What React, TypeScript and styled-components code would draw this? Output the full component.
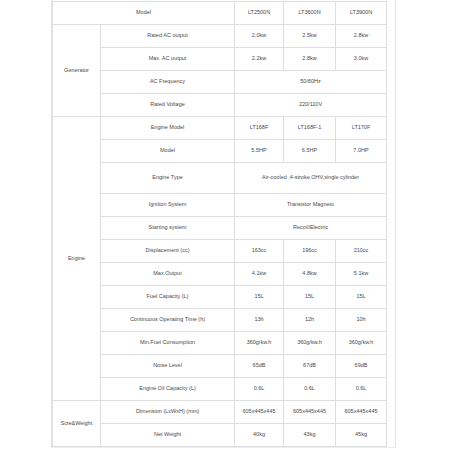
import styled, { createGlobalStyle } from "styled-components";

const GlobalStyle = createGlobalStyle`
  html, body {
    margin: 0;
    padding: 0;
    background: #ffffff;
  }
  body {
    font-family: "Liberation Sans", Arial, sans-serif;
  }
`;

const Frame = styled.div`
  margin-left: 51px;
  width: 345px;
  height: 448px;
  padding-top: 1px;
  border-left: 1px solid #e4e4e4;
  border-right: 1px solid #e4e4e4;
  border-bottom: 1px solid #ececec;
  box-sizing: border-box;
`;

const Table = styled.table`
  border-collapse: collapse;
  table-layout: fixed;
  width: 335px;
  color: #4a4a4a;
  font-size: 5.5px;
`;

const Cell = styled.td<{ $tall?: boolean }>`
  border: 1px solid #dedede;
  height: ${(p) => (p.$tall ? 30 : 22)}px;
  padding: 0;
  text-align: center;
  vertical-align: middle;
  white-space: nowrap;
  line-height: 1;
`;

type Row = {
  label: string;
  values: string[];
  tall?: boolean;
};

type Group = {
  name: string;
  rows: Row[];
};

const groups: Group[] = [
  {
    name: "Generator",
    rows: [
      { label: "Rated AC output", values: ["2.0kw", "2.5kw", "2.8kw"] },
      { label: "Max. AC output", values: ["2.2kw", "2.8kw", "3.0kw"] },
      { label: "AC Frequency", values: ["50/60Hz"] },
      { label: "Rated Voltage", values: ["220/110V"] },
    ],
  },
  {
    name: "Engine",
    rows: [
      { label: "Engine Model", values: ["LT168F", "LT168F-1", "LT170F"] },
      { label: "Model", values: ["5.5HP", "6.5HP", "7.0HP"] },
      {
        label: "Engine Type",
        values: ["Air-cooled ,4-stroke,OHV,single cylinder"],
        tall: true,
      },
      { label: "Ignition System", values: ["Transistor Magneto"] },
      { label: "Starting system", values: ["Recoil/Electric"] },
      { label: "Displacement (cc)", values: ["163cc", "196cc", "210cc"] },
      { label: "Max.Output", values: ["4.1kw", "4.8kw", "5.1kw"] },
      { label: "Fuel Capacity (L)", values: ["15L", "15L", "15L"] },
      { label: "Continuous Operating Time (h)", values: ["13h", "12h", "10h"] },
      {
        label: "Min.Fuel Consumption",
        values: ["360g/kw.h", "360g/kw.h", "360g/kw.h"],
      },
      { label: "Noise Level", values: ["65dB", "67dB", "69dB"] },
      { label: "Engine Oil Capacity (L)", values: ["0.6L", "0.6L", "0.6L"] },
    ],
  },
  {
    name: "Size&Weight",
    rows: [
      {
        label: "Dimension (LxWxH) (mm)",
        values: ["605x445x445", "605x445x445", "605x445x445"],
      },
      { label: "Net Weight", values: ["40kg", "43kg", "45kg"] },
    ],
  },
];

export default function App() {
  return (
    <>
      <GlobalStyle />
      <Frame>
        <Table>
          <colgroup>
            <col style={{ width: 48 }} />
            <col style={{ width: 134 }} />
            <col style={{ width: 49 }} />
            <col style={{ width: 52 }} />
            <col style={{ width: 51 }} />
          </colgroup>
          <tbody>
            <tr>
              <Cell colSpan={2}>Model</Cell>
              <Cell>LT2500N</Cell>
              <Cell>LT3600N</Cell>
              <Cell>LT3900N</Cell>
            </tr>
            {groups.map((group) =>
              group.rows.map((row, i) => (
                <tr key={group.name + row.label}>
                  {i === 0 && (
                    <Cell rowSpan={group.rows.length}>{group.name}</Cell>
                  )}
                  <Cell $tall={row.tall}>{row.label}</Cell>
                  {row.values.length === 1 ? (
                    <Cell colSpan={3} $tall={row.tall}>
                      {row.values[0]}
                    </Cell>
                  ) : (
                    row.values.map((v, j) => (
                      <Cell key={j} $tall={row.tall}>
                        {v}
                      </Cell>
                    ))
                  )}
                </tr>
              ))
            )}
          </tbody>
        </Table>
      </Frame>
    </>
  );
}
